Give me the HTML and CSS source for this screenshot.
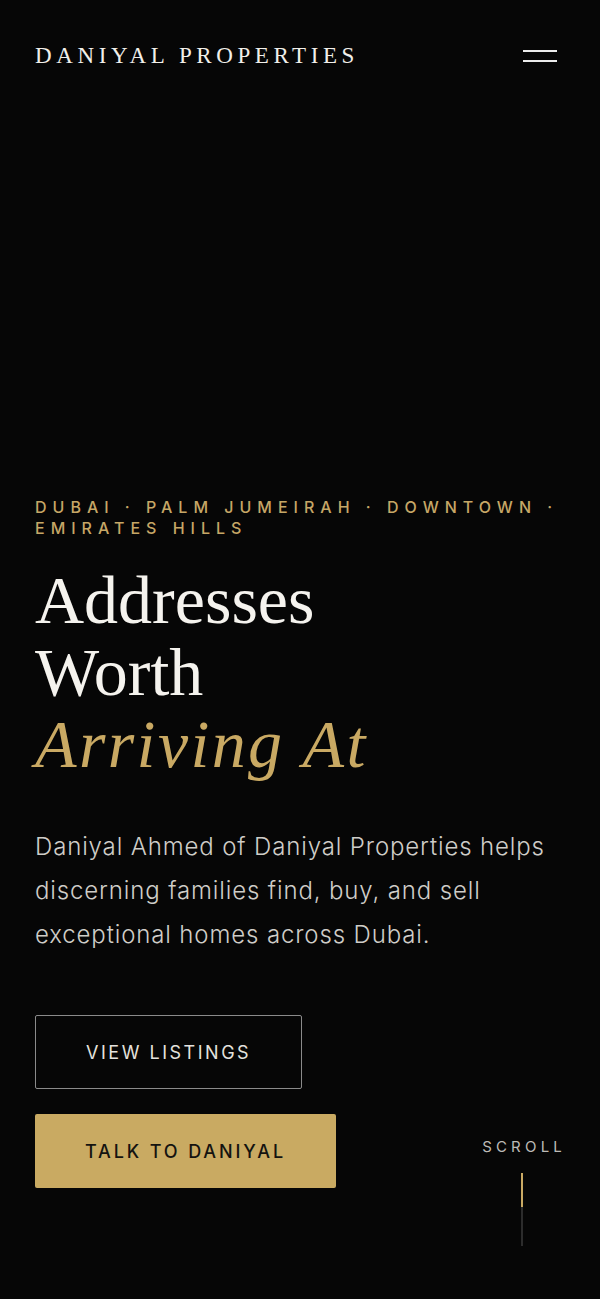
FILE: index.html
```html
<!DOCTYPE html>
<html lang="en">
<head>
<meta charset="utf-8">
<meta name="viewport" content="width=device-width, initial-scale=1">
<title>Daniyal Properties</title>
<link rel="stylesheet" href="styles.css">
</head>
<body>
<div class="page">
  <header class="site-header">
    <a class="logo" href="#">DANIYAL PROPERTIES</a>
    <button class="menu-btn" aria-label="Menu">
      <span class="menu-line"></span>
      <span class="menu-line"></span>
    </button>
  </header>
  <main class="hero">
    <div class="hero-content">
      <p class="eyebrow">DUBAI · PALM JUMEIRAH · DOWNTOWN · EMIRATES HILLS</p>
      <h1 class="headline">Addresses<br>Worth<br><em class="accent">Arriving At</em></h1>
      <p class="lede">Daniyal Ahmed of Daniyal Properties helps discerning families find, buy, and sell exceptional homes across Dubai.</p>
      <div class="actions">
        <a class="btn btn-outline" href="#">VIEW LISTINGS</a>
        <a class="btn btn-gold" href="#">TALK TO DANIYAL</a>
      </div>
    </div>
    <div class="scroll-cue">
      <span class="scroll-label">SCROLL</span>
      <span class="scroll-line"><span class="scroll-fill"></span></span>
    </div>
  </main>
</div>
</body>
</html>
```

FILE: styles.css
```css
* { box-sizing: border-box; }
html, body { margin: 0; padding: 0; background: #060606; }
body { font-family: Inter, "Liberation Sans", sans-serif; color: #e8e6e1; }

.page {
  min-height: 100vh;
  display: flex;
  flex-direction: column;
  background: #060606;
}

.site-header {
  display: flex;
  align-items: center;
  justify-content: space-between;
  padding: 38px 43px 0 35px;
}

.logo {
  font-family: "Liberation Serif", "DejaVu Serif", serif;
  font-size: 23px;
  letter-spacing: 0.2em;
  color: #f1efea;
  text-decoration: none;
  line-height: 36px;
}

.menu-btn {
  background: none;
  border: 0;
  padding: 8px 0;
  display: flex;
  flex-direction: column;
  gap: 8px;
  cursor: pointer;
}
.menu-line {
  display: block;
  width: 34px;
  height: 2px;
  background: #ececec;
}

.hero {
  flex: 1;
  position: relative;
  display: flex;
  flex-direction: column;
  justify-content: flex-end;
  padding: 0 35px 111px 35px;
}

.eyebrow {
  margin: 0;
  font-size: 16px;
  line-height: 21px;
  font-weight: 500;
  letter-spacing: 0.375em;
  color: #c6a766;
}

.headline {
  margin: 25px 0 0 0;
  font-family: "Liberation Serif", "DejaVu Serif", serif;
  font-weight: 400;
  font-size: 68px;
  line-height: 72px;
  color: #f5f3ee;
}
.accent {
  font-style: italic;
  color: #c9a963;
  letter-spacing: 0.035em;
}

.lede {
  margin: 45px 0 0 0;
  font-size: 24px;
  line-height: 44px;
  font-weight: 300;
  letter-spacing: 0.036em;
  color: #cfcdc8;
}

.actions {
  margin-top: 58px;
  display: flex;
  flex-direction: column;
  align-items: flex-start;
  gap: 25px;
}

.btn {
  display: inline-flex;
  align-items: center;
  justify-content: center;
  height: 74px;
  padding: 0 50px;
  font-size: 18px;
  letter-spacing: 0.14em;
  text-decoration: none;
  border-radius: 2px;
}
.btn-outline {
  border: 1.5px solid #8a8a8a;
  color: #e4e2dd;
  font-weight: 400;
}
.btn-gold {
  background: #c9aa62;
  color: #141310;
  font-weight: 500;
  letter-spacing: 0.16em;
}

.scroll-cue {
  position: absolute;
  right: 34px;
  bottom: 53px;
  display: flex;
  flex-direction: column;
  align-items: center;
  gap: 18px;
}
.scroll-label {
  font-size: 15px;
  letter-spacing: 0.28em;
  padding-left: 0.28em;
  color: #bdbbb6;
  line-height: 16px;
}
.scroll-line {
  display: block;
  width: 2px;
  height: 73px;
  background: #2c2c2c;
  position: relative;
}
.scroll-fill {
  position: absolute;
  left: 0;
  top: 0;
  width: 2px;
  height: 34px;
  background: #c9a963;
}
```
